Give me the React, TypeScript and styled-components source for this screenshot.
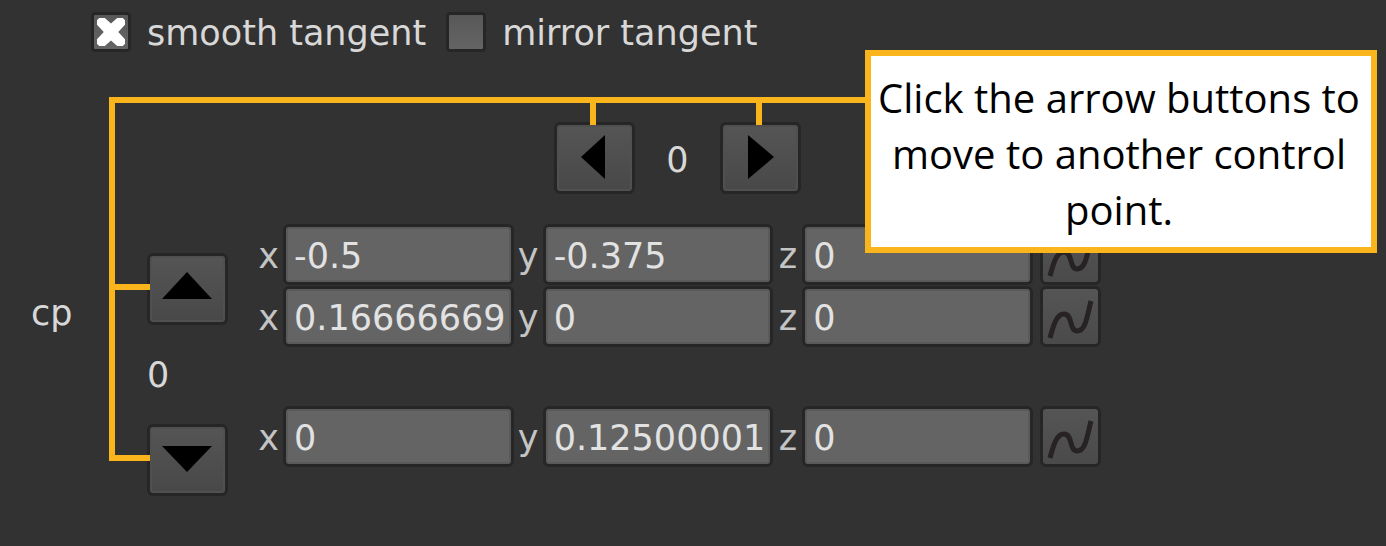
import React, { useState } from "react";
import styled, { createGlobalStyle, css } from "styled-components";

const accent = "#fab41c";
const edge = "#262626";

const GlobalStyle = createGlobalStyle`
  *, *::before, *::after { box-sizing: border-box; }
  body {
    margin: 0;
    background: #323232;
    color: #d8d8d8;
    font-family: "DejaVu Sans", sans-serif;
    font-size: 35px;
    line-height: 42px;
  }
`;

const Panel = styled.main`
  position: relative;
  padding: 10px 0 50px;
`;

const Options = styled.div`
  display: flex;
  align-items: center;
  gap: 20px;
  padding-left: 91px;
`;

const Option = styled.label`
  display: flex;
  align-items: center;
  gap: 16px;
  span { padding-top: 2px; }
`;

const Tick = styled.input`
  appearance: none;
  flex: none;
  width: 40px;
  height: 40px;
  margin: 0;
  border: 3px solid ${edge};
  border-radius: 4px;
  background: linear-gradient(#585858, #646464);
  &:checked::before {
    content: "";
    display: block;
    width: 28px;
    height: 28px;
    margin: 3px;
    background: #fff;
    clip-path: polygon(
      8% 0, 28% 0, 50% 20%, 72% 0, 92% 0, 100% 8%, 100% 24%, 76% 50%, 100% 76%, 100% 92%,
      92% 100%, 72% 100%, 50% 80%, 28% 100%, 8% 100%, 0 92%, 0 76%, 24% 50%, 0 24%, 0 8%
    );
  }
`;

const Editor = styled.section`
  display: grid;
  grid-template-columns: 116px 107px minmax(0, 847px);
  margin-top: 68px;
  padding-left: 31px;
`;

const Columns = styled.div`
  grid-column: 3;
  display: flex;
  justify-content: center;
  align-items: center;
  margin-bottom: 30px;
`;

const Rows = styled.div`
  display: flex;
  flex-direction: column;
  align-items: flex-start;
  justify-content: space-between;
  height: 243px;
  margin-top: 29px;
`;

const Index = styled.output<{ $wide?: boolean }>`
  display: block;
  ${(p) => p.$wide && css`width: 85px; padding-top: 4px; text-align: center;`}
`;

const Name = styled.span`
  margin-top: 68px;
`;

const StepButton = styled.button<{ $link: "top" | "left" }>`
  position: relative;
  flex: none;
  width: 81px;
  height: 72px;
  padding: 0;
  border: 3px solid ${edge};
  border-radius: 6px;
  background: linear-gradient(#555, #484848);
  box-shadow: inset 0 0 0 2px #505050;
  &::before {
    content: "";
    position: absolute;
    background: ${accent};
    ${(p) =>
      p.$link === "top"
        ? css`left: 33px; bottom: 100%; width: 6px; height: 22px;`
        : css`right: 100%; top: 28px; width: 35px; height: 6px;`}
  }
  svg { display: block; }
`;

const Vectors = styled.div`
  display: grid;
  grid-template-columns: minmax(0, 1fr);
  grid-template-rows: 61px 61px auto;
  row-gap: 1px;
`;

const VectorRow = styled.div<{ $apart?: boolean }>`
  display: flex;
  margin-top: ${(p) => (p.$apart ? 58 : 0)}px;
  height: 61px;
`;

const Axis = styled.label`
  display: flex;
  flex: 1;
  min-width: 0;
  align-items: center;
  span { flex: none; width: 29px; padding-top: 2px; text-align: center; color: #c4c4c4; }
`;

const Field = styled.input`
  flex: 1;
  min-width: 0;
  height: 61px;
  padding: 2px 0 0 8px;
  border: 3px solid ${edge};
  border-radius: 6px;
  background: #646464;
  box-shadow: inset 0 0 0 2px #5a5a5a;
  color: #e2e2e2;
  font: inherit;
  outline: none;
`;

const CurveButton = styled.button`
  flex: none;
  width: 61px;
  height: 61px;
  margin-left: 7px;
  padding: 0;
  border: 3px solid ${edge};
  border-radius: 6px;
  background: linear-gradient(#555, #4a4a4a);
  svg { display: block; }
`;

const Bracket = styled.div`
  position: absolute;
  top: 97px;
  left: 109px;
  width: 756px;
  height: 364px;
  border-top: 6px solid ${accent};
  pointer-events: none;
  &::before {
    content: "";
    display: block;
    width: 6px;
    height: 100%;
    background: ${accent};
  }
`;

const Callout = styled.aside`
  position: absolute;
  top: 50px;
  left: 865px;
  width: 512px;
  padding: 14px 4px 9px 0;
  border: 6px solid ${accent};
  background: #fff;
  color: #000;
  font-family: "Open Sans", sans-serif;
  font-size: 40px;
  line-height: 56px;
  text-align: center;
`;

const arrows = {
  left: "24,32 48,10 48,54",
  right: "51,32 25,10 25,54",
  up: "37,16 62,43 12,43",
  down: "37,45 62,19 12,19",
};

function Step({ to, onClick }: { to: keyof typeof arrows; onClick: () => void }) {
  const vertical = to === "up" || to === "down";
  return (
    <StepButton $link={vertical ? "left" : "top"} aria-label={`Move ${to}`} onClick={onClick}>
      <svg width="75" height="66" viewBox="0 0 75 66">
        <polygon points={arrows[to]} fill="#000" />
      </svg>
    </StepButton>
  );
}

const vectors = [
  ["-0.5", "-0.375", "0"],
  ["0.16666669", "0", "0"],
  ["0", "0.12500001", "0"],
];

export default function App() {
  const [column, setColumn] = useState(0);
  const [row, setRow] = useState(0);
  return (
    <>
      <GlobalStyle />
      <Panel>
        <Options>
          <Option>
            <Tick type="checkbox" defaultChecked />
            <span>smooth tangent</span>
          </Option>
          <Option>
            <Tick type="checkbox" />
            <span>mirror tangent</span>
          </Option>
        </Options>
        <Bracket />
        <Editor>
          <Columns>
            <Step to="left" onClick={() => setColumn(Math.max(0, column - 1))} />
            <Index $wide>{column}</Index>
            <Step to="right" onClick={() => setColumn(column + 1)} />
          </Columns>
          <Name>cp</Name>
          <Rows>
            <Step to="up" onClick={() => setRow(Math.max(0, row - 1))} />
            <Index>{row}</Index>
            <Step to="down" onClick={() => setRow(row + 1)} />
          </Rows>
          <Vectors>
            {vectors.map((values, i) => (
              <VectorRow key={i} $apart={i === 2}>
                {values.map((value, j) => (
                  <Axis key={j}>
                    <span>{"xyz"[j]}</span>
                    <Field type="text" defaultValue={value} />
                  </Axis>
                ))}
                <CurveButton aria-label="Edit curve">
                  <svg width="55" height="55" viewBox="0 0 55 55">
                    <path
                      d="M7 49C10 38 13 25 21 25C30 25 26 42 34 42C43 42 44 27 48 12"
                      fill="none"
                      stroke="#272324"
                      strokeWidth="5"
                    />
                  </svg>
                </CurveButton>
              </VectorRow>
            ))}
          </Vectors>
        </Editor>
        <Callout>Click the arrow buttons to move to another control point.</Callout>
      </Panel>
    </>
  );
}
